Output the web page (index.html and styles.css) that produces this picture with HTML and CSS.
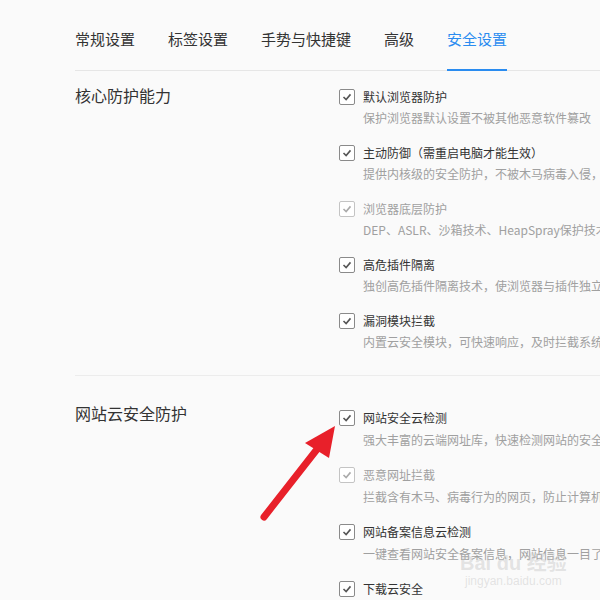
FILE: index.html
```html
<!DOCTYPE html>
<html lang="zh-CN">
<head>
  <meta charset="UTF-8" />
  <title>安全设置</title>
  <link rel="stylesheet" href="styles.css">
</head>
<body>
  <div class="page">
    <nav class="tabs">
      <span class="tab">常规设置</span>
      <span class="tab">标签设置</span>
      <span class="tab">手势与快捷键</span>
      <span class="tab">高级</span>
      <span class="tab active">安全设置</span>
    </nav>

    <section class="group first">
      <h3 class="group-title">核心防护能力</h3>
      <div class="items">
        <div class="item">
          <div class="row"><span class="box"><svg viewBox="0 0 16 16"><polyline points="4,8 7,11 12,5"/></svg></span><span class="label">默认浏览器防护</span></div>
          <div class="desc">保护浏览器默认设置不被其他恶意软件篡改</div>
        </div>
        <div class="item">
          <div class="row"><span class="box"><svg viewBox="0 0 16 16"><polyline points="4,8 7,11 12,5"/></svg></span><span class="label">主动防御（需重启电脑才能生效）</span></div>
          <div class="desc">提供内核级的安全防护，不被木马病毒入侵，保护系统安全</div>
        </div>
        <div class="item disabled">
          <div class="row"><span class="box"><svg viewBox="0 0 16 16"><polyline points="4,8 7,11 12,5"/></svg></span><span class="label">浏览器底层防护</span></div>
          <div class="desc">DEP、ASLR、沙箱技术、HeapSpray保护技术</div>
        </div>
        <div class="item">
          <div class="row"><span class="box"><svg viewBox="0 0 16 16"><polyline points="4,8 7,11 12,5"/></svg></span><span class="label">高危插件隔离</span></div>
          <div class="desc">独创高危插件隔离技术，使浏览器与插件独立运行</div>
        </div>
        <div class="item">
          <div class="row"><span class="box"><svg viewBox="0 0 16 16"><polyline points="4,8 7,11 12,5"/></svg></span><span class="label">漏洞模块拦截</span></div>
          <div class="desc">内置云安全模块，可快速响应，及时拦截系统漏洞攻击</div>
        </div>
      </div>
    </section>

    <section class="group second">
      <h3 class="group-title">网站云安全防护</h3>
      <div class="items">
        <div class="item">
          <div class="row"><span class="box"><svg viewBox="0 0 16 16"><polyline points="4,8 7,11 12,5"/></svg></span><span class="label">网站安全云检测</span></div>
          <div class="desc">强大丰富的云端网址库，快速检测网站的安全性</div>
        </div>
        <div class="item disabled">
          <div class="row"><span class="box"><svg viewBox="0 0 16 16"><polyline points="4,8 7,11 12,5"/></svg></span><span class="label">恶意网址拦截</span></div>
          <div class="desc">拦截含有木马、病毒行为的网页，防止计算机被感染</div>
        </div>
        <div class="item">
          <div class="row"><span class="box"><svg viewBox="0 0 16 16"><polyline points="4,8 7,11 12,5"/></svg></span><span class="label">网站备案信息云检测</span></div>
          <div class="desc">一键查看网站安全备案信息，网站信息一目了然</div>
        </div>
        <div class="item">
          <div class="row"><span class="box"><svg viewBox="0 0 16 16"><polyline points="4,8 7,11 12,5"/></svg></span><span class="label">下载云安全</span></div>
          <div class="desc">下载文件时云端检测，保护下载安全</div>
        </div>
      </div>
    </section>
  </div>

  <!-- annotation arrow drawn over the screenshot -->
  <svg class="arrow" viewBox="0 0 600 600">
    <line x1="264" y1="517" x2="318" y2="448" />
    <polygon points="335,426 305,443 329,458" />
  </svg>

  <div class="watermark">
    <div class="wm-big">Bai du 经验</div>
    <div class="wm-small">jingyan.baidu.com</div>
  </div>
</body>
</html>
```

FILE: styles.css
```css
html, body {
  margin: 0;
  height: 100%;
}
body {
  background: #fafafa;
  font-family: "Noto Sans CJK SC", "Noto Sans", sans-serif;
  color: #333;
  overflow: hidden;
  position: relative;
}
.page {
  padding-left: 75px;
  white-space: nowrap;
}
.tabs {
  display: flex;
  gap: 33px;
  padding-top: 29px;
  border-bottom: 1px solid #e6e6e6;
}
.tab {
  font-size: 15px;
  line-height: 20px;
  padding-bottom: 20px;
  border-bottom: 2px solid transparent;
  margin-bottom: -1px;
  color: #333;
}
.tab.active {
  color: #2a8cf0;
  border-bottom-color: #2a8cf0;
}
.group {
  display: flex;
}
.group.first {
  padding-top: 16px;
  padding-bottom: 23px;
  border-bottom: 1px solid #ececec;
}
.group.second {
  padding-top: 32px;
}
.group-title {
  width: 264px;
  flex: none;
  margin: -2px 0 0;
  font-size: 16px;
  line-height: 20px;
  font-weight: normal;
  color: #333;
}
.group.second .group-title {
  margin-top: -5px;
}
.items {
  flex: 1;
  overflow: hidden;
}
.item {
  margin-bottom: 15px;
}
.item:last-child {
  margin-bottom: 0;
}
.row {
  display: flex;
  align-items: center;
  height: 20px;
}
.box {
  width: 14px;
  height: 14px;
  border: 1px solid #8a8a8a;
  border-radius: 2px;
  background: #fff;
  margin-right: 8px;
  flex: none;
}
.box svg {
  display: block;
  width: 14px;
  height: 14px;
}
.box polyline {
  fill: none;
  stroke: #555;
  stroke-width: 1.8;
}
.label {
  font-size: 12px;
  line-height: 20px;
  color: #333;
}
.desc {
  margin-top: 1px;
  padding-left: 24px;
  font-size: 12px;
  line-height: 20px;
  color: #a0a0a0;
}
.group.second .desc {
  margin-top: 2px;
}
.item.disabled .box {
  border-color: #c4c4c4;
}
.item.disabled polyline {
  stroke: #aaa;
}
.item.disabled .label {
  color: #a0a0a0;
}
.arrow {
  position: absolute;
  left: 0;
  top: 0;
  width: 600px;
  height: 600px;
  pointer-events: none;
}
.arrow line {
  stroke: #e8202a;
  stroke-width: 7;
  stroke-linecap: round;
}
.arrow polygon {
  fill: #e8202a;
}
.watermark {
  position: absolute;
  left: 460px;
  top: 552px;
  color: rgba(190, 190, 190, 0.4);
  font-family: "Liberation Sans", "Noto Sans CJK SC", sans-serif;
  text-align: center;
}
.wm-big {
  font-size: 20px;
  line-height: 22px;
  font-weight: bold;
}
.wm-small {
  font-size: 12px;
  line-height: 14px;
}
```
